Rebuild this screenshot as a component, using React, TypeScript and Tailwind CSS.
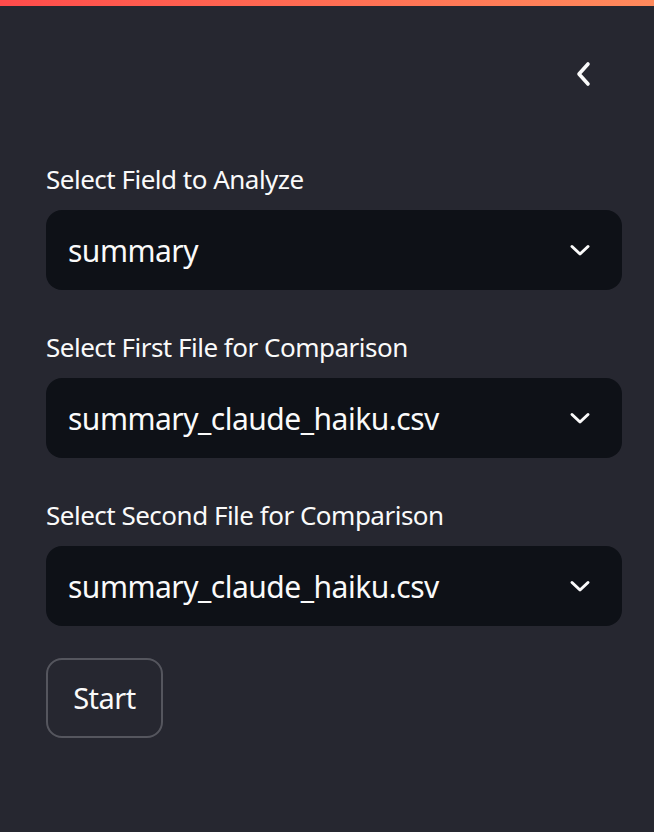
const fields = [
  { label: "Select Field to Analyze", value: "summary" },
  { label: "Select First File for Comparison", value: "summary_claude_haiku.csv" },
  { label: "Select Second File for Comparison", value: "summary_claude_haiku.csv" },
];

function ChevronDown() {
  return (
    <svg width="24" height="24" viewBox="0 0 24 24" fill="none" stroke="#fafafa" strokeWidth="3" strokeLinecap="round" strokeLinejoin="round">
      <path d="M4 8.5l8 7.5 8-7.5" />
    </svg>
  );
}

export default function App() {
  return (
    <div className="min-h-[832px] w-[654px] bg-[#262730] text-[#fafafa] font-['Noto_Sans',sans-serif]">
      <div className="h-[6px] bg-gradient-to-r from-[#ff4b4b] to-[#ff8a5c]" />
      <div className="flex justify-end pr-[58px] pt-[54px]">
        <svg width="24" height="28" viewBox="0 0 24 28" fill="none" stroke="#fafafa" strokeWidth="3.6" strokeLinecap="round" strokeLinejoin="round">
          <path d="M16 4L7 14l9 10" />
        </svg>
      </div>
      <div className="flex flex-col pl-[46px] pr-[32px] pt-[75px]">
        {fields.map((f) => (
          <div key={f.label} className="mb-[41px] flex flex-col gap-[15px]">
            <label className="text-[26px] leading-[32px] tracking-[-0.5px]">{f.label}</label>
            <div className="flex h-[80px] items-center justify-between rounded-[16px] bg-[#0e1117] pl-[22px] pr-[30px]">
              <span className="text-[30px] tracking-[-0.5px]">{f.value}</span>
              <ChevronDown />
            </div>
          </div>
        ))}
        <div className="-mt-[9px]">
          <button className="h-[80px] w-[117px] rounded-[16px] border-2 border-[#55565e] text-[29px] tracking-[-0.5px]">
            Start
          </button>
        </div>
      </div>
    </div>
  );
}
